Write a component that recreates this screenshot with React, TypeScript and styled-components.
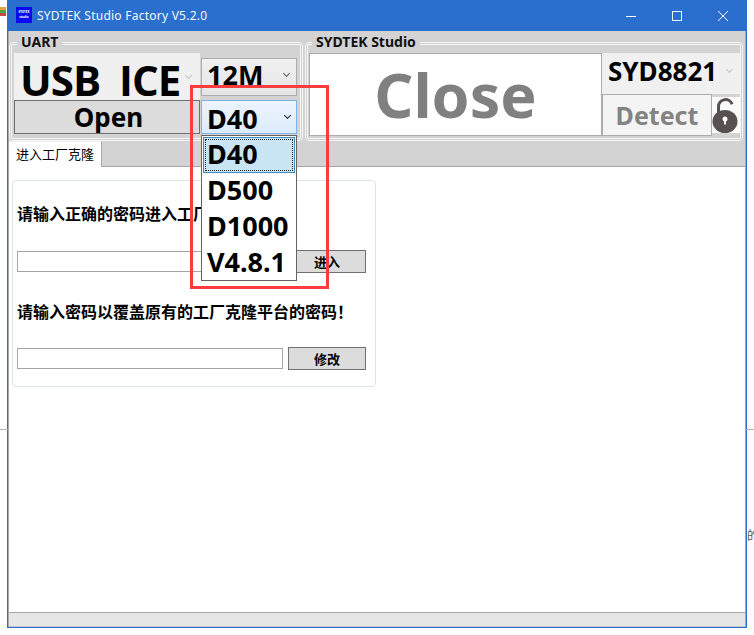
import React from 'react'
import styled, {createGlobalStyle} from 'styled-components'

const UI_FONT = `"Noto Sans", "Noto Sans CJK SC", "Open Sans", sans-serif`

const GlobalStyle = createGlobalStyle`
  html, body {
    margin: 0;
    padding: 0;
    background: #fff;
  }
  body {
    width: 754px;
    height: 635px;
    overflow: hidden;
    font-family: ${UI_FONT};
  }
  * {
    box-sizing: border-box;
  }
`

export default function App() {
  return (
    <Desktop>
      <GlobalStyle />
      <BehindIcon />
      <BehindLine $left />
      <BehindLine />
      <BehindGlyph>的</BehindGlyph>
      <Window>
        <TitleBar>
          <AppIcon>
            <span>SYDTEK</span>
            <span>studio</span>
          </AppIcon>
          <WindowTitle>SYDTEK Studio Factory V5.2.0</WindowTitle>
          <WindowButtons>
            <WindowButton>
              <svg width="12" height="12" viewBox="0 0 12 12">
                <path d="M1 6.5h10" stroke="#fff" strokeWidth="1" />
              </svg>
            </WindowButton>
            <WindowButton>
              <svg width="12" height="12" viewBox="0 0 12 12">
                <rect x="1.5" y="1.5" width="9" height="9" fill="none" stroke="#fff" />
              </svg>
            </WindowButton>
            <WindowButton>
              <svg width="12" height="12" viewBox="0 0 12 12">
                <path d="M1 1l10 10M11 1L1 11" stroke="#fff" strokeWidth="1" />
              </svg>
            </WindowButton>
          </WindowButtons>
        </TitleBar>

        <Client>
          <Toolbar>
            <UartGroup>
              <GroupTitle>UART</GroupTitle>
              <UartGrid>
                <PortSelect>
                  <PortText>USB ICE</PortText>
                  <Chevron $faded />
                </PortSelect>
                <BaudSelect>
                  <ComboText>12M</ComboText>
                  <Chevron />
                </BaudSelect>
                <OpenButton>Open</OpenButton>
                <VersionSelect>
                  <VersionText>D40</VersionText>
                  <Chevron $dark />
                  <VersionList>
                    <VersionOption $selected>D40</VersionOption>
                    <VersionOption>D500</VersionOption>
                    <VersionOption>D1000</VersionOption>
                    <VersionOption>V4.8.1</VersionOption>
                  </VersionList>
                </VersionSelect>
              </UartGrid>
            </UartGroup>

            <StudioGroup>
              <StudioTitle>SYDTEK Studio</StudioTitle>
              <StudioGrid>
                <StatusBox>Close</StatusBox>
                <StudioSide>
                  <ChipSelect>
                    <ChipText>SYD8821</ChipText>
                    <Chevron $faded />
                  </ChipSelect>
                  <DetectRow>
                    <DetectButton>Detect</DetectButton>
                    <LockBox>
                      <svg width="26" height="35" viewBox="0 0 26 35">
                        <path
                          d="M6.5 16V8.5a7 7 0 0 1 13.6-2.2"
                          fill="none"
                          stroke="#57514f"
                          strokeWidth="3"
                        />
                        <ellipse cx="13" cy="23.5" rx="12.5" ry="11.5" fill="#57514f" />
                        <circle cx="13" cy="21" r="2.5" fill="#fff" />
                        <rect x="12" y="21" width="2" height="5.5" fill="#fff" />
                      </svg>
                    </LockBox>
                  </DetectRow>
                </StudioSide>
              </StudioGrid>
            </StudioGroup>
          </Toolbar>

          <TabStrip>
            <Tab>进入工厂克隆</Tab>
          </TabStrip>

          <TabPage>
            <Card>
              <FormBlock>
                <FormLabel>请输入正确的密码进入工厂克隆平台！</FormLabel>
                <FormRow>
                  <TextField />
                  <FormButton>进入</FormButton>
                </FormRow>
              </FormBlock>
              <FormBlock $second>
                <FormLabel>请输入密码以覆盖原有的工厂克隆平台的密码！</FormLabel>
                <FormRow>
                  <TextField />
                  <FormButton>修改</FormButton>
                </FormRow>
              </FormBlock>
            </Card>
          </TabPage>

          <StatusBar />
        </Client>
      </Window>
      <Highlight />
    </Desktop>
  )
}

const Desktop = styled.div`
  position: relative;
  width: 754px;
  height: 635px;
  padding-left: 7px;
  overflow: hidden;
  background: #fff;
`

const BehindIcon = styled.div`
  position: absolute;
  top: 7px;
  left: 0;
  width: 6px;
  height: 9px;
  background: linear-gradient(#e8a23c 0 30%, #4fa34a 30% 65%, #c0503c 65% 100%);
`

const BehindLine = styled.div<{$left?: boolean}>`
  position: absolute;
  top: 429px;
  height: 1px;
  width: 8px;
  background: #b4b4b4;
  ${p => (p.$left ? 'left: 0;' : 'right: 0;')}
`

const BehindGlyph = styled.div`
  position: absolute;
  top: 529px;
  left: 747px;
  width: 7px;
  overflow: hidden;
  font-size: 12px;
  line-height: 14px;
  color: #555;
`

const Window = styled.div`
  width: 740px;
  height: 628px;
  display: flex;
  flex-direction: column;
  border: 1px solid #2b6fce;
  border-top: 0;
  background: #2b6fce;
`

const TitleBar = styled.div`
  height: 31px;
  flex: none;
  display: flex;
  align-items: center;
  padding-left: 8px;
  background: #2b6fce;
  color: #fff;
`

const AppIcon = styled.div`
  width: 16px;
  height: 16px;
  margin-top: -1px;
  display: flex;
  flex-direction: column;
  align-items: center;
  justify-content: center;
  gap: 2px;
  overflow: hidden;
  background: #0a0af0;
  color: #fff;
  font-size: 3px;
  line-height: 3px;
  font-weight: 700;
`

const WindowTitle = styled.div`
  margin-left: 5px;
  font-size: 12px;
  color: #f2f6fc;
  white-space: nowrap;
  letter-spacing: 0.02em;
`

const WindowButtons = styled.div`
  margin-left: auto;
  display: flex;
`

const WindowButton = styled.div`
  width: 46px;
  height: 31px;
  display: flex;
  align-items: center;
  justify-content: center;
`

const Client = styled.div`
  flex: 1;
  min-height: 0;
  display: flex;
  flex-direction: column;
  background: #fff;
  border-left: 1px solid #a8a8a8;
  border-right: 1px solid #a8a8a8;
`

const Toolbar = styled.div`
  height: 110px;
  flex: none;
  display: flex;
  gap: 2px;
  padding: 4px 2px 0 0;
  background: #d3d3d3;
`

const Group = styled.fieldset`
  margin: 0;
  height: 106px;
  padding: 0;
  min-width: 0;
  border: 3px double #f5f5f5;
  border-radius: 4px;
`

const UartGroup = styled(Group)`
  width: 294px;
  flex: none;
`

const StudioGroup = styled(Group)`
  flex: 1;
`

const GroupTitle = styled.legend`
  margin-left: 5px;
  padding: 0 4px 2px;
  font-size: 14px;
  line-height: 14px;
  font-weight: 700;
  color: #111;
`

const StudioTitle = styled(GroupTitle)`
  margin-left: 4px;
`

const UartGrid = styled.div`
  display: grid;
  grid-template-columns: 186px 96px;
  grid-template-rows: 47px 34px;
  gap: 0 1px;
  margin: 2px 0 0 2px;
`

const Combo = styled.div`
  position: relative;
  display: flex;
  align-items: center;
  justify-content: space-between;
  color: #000;
  font-weight: 700;
`

const PortSelect = styled(Combo)`
  background: #f0f0f0;
  padding: 0 7px 0 6px;
`

const PortText = styled.span`
  padding-top: 6px;
  font-family: "Open Sans", sans-serif;
  font-size: 42px;
  line-height: 42px;
  letter-spacing: -1px;
  word-spacing: 9px;
  white-space: nowrap;
`

const BaudSelect = styled(Combo)`
  height: 38px;
  align-self: center;
  padding: 0 5px 3px;
  border: 1px solid #acacac;
  background: linear-gradient(#f0f0f0, #e5e5e5);
`

const ComboText = styled.span`
  font-size: 27px;
  line-height: 32px;
`

const VersionText = styled(ComboText)`
  padding-top: 3px;
`

const OpenButton = styled.div`
  display: flex;
  align-items: center;
  justify-content: center;
  padding-left: 3px;
  border: 1px solid #707070;
  background: #dcdcdc;
  color: #000;
  font-size: 26px;
  line-height: 30px;
  font-weight: 700;
`

const VersionSelect = styled(Combo)`
  padding: 0 4px 0 5px;
  border: 1px solid #7eb4ea;
  background: linear-gradient(#ecf4fc, #dcecfc);
`

const VersionList = styled.div`
  position: absolute;
  z-index: 2;
  top: 34px;
  left: -1px;
  width: 96px;
  height: 146px;
  padding: 1px;
  border: 1px solid #646464;
  background: #fff;
`

const VersionOption = styled.div<{$selected?: boolean}>`
  height: 36px;
  padding-left: 4px;
  font-size: 27px;
  line-height: 34px;
  color: #000;
  ${p =>
    p.$selected &&
    `
    background: #c9e5f4;
    box-shadow: inset 0 0 0 1px #3c8dbc;
    outline: 1px dotted #222;
    outline-offset: -3px;
  `}
`

const StudioGrid = styled.div`
  display: flex;
  margin: 2px 3px 0 1px;
`

const StatusBox = styled.div`
  width: 293px;
  height: 83px;
  flex: none;
  display: flex;
  align-items: center;
  justify-content: center;
  border: 1px solid #acacac;
  background: #fff;
  color: #808080;
  font-size: 61px;
  line-height: 80px;
  font-weight: 700;
`

const StudioSide = styled.div`
  width: 138px;
  flex: none;
`

const ChipSelect = styled(Combo)`
  height: 41px;
  padding: 0 6px 5px;
  background: #f0f0f0;
`

const ChipText = styled.span`
  font-size: 26px;
  line-height: 32px;
`

const DetectRow = styled.div`
  display: flex;
  align-items: center;
`

const DetectButton = styled.div`
  width: 110px;
  height: 42px;
  flex: none;
  display: flex;
  align-items: center;
  justify-content: center;
  padding-bottom: 1px;
  border: 1px solid #adadad;
  background: #f4f4f4;
  color: #838383;
  font-size: 25px;
  line-height: 30px;
  font-weight: 700;
`

const LockBox = styled.div`
  width: 28px;
  height: 36px;
  display: flex;
  align-items: center;
  justify-content: flex-start;
  background: #fafafa;
`

const Chevron = styled.i<{$faded?: boolean; $dark?: boolean}>`
  display: block;
  width: 5px;
  height: 5px;
  margin: -3px 2px 0 0;
  border-right: 1.5px solid ${p => (p.$faded ? '#c4c4c4' : p.$dark ? '#222' : '#606060')};
  border-bottom: 1.5px solid ${p => (p.$faded ? '#c4c4c4' : p.$dark ? '#222' : '#606060')};
  transform: rotate(45deg);
`

const TabStrip = styled.div`
  height: 26px;
  flex: none;
  display: flex;
  align-items: flex-end;
  background: #d3d3d3;
  border-bottom: 1px solid #a8a8a8;
`

const Tab = styled.div`
  width: 93px;
  height: 26px;
  margin-bottom: -1px;
  padding-top: 2px;
  text-align: center;
  background: #fff;
  border-right: 1px solid #a8a8a8;
  border-top: 1px solid #f0f0f0;
  font-size: 13px;
  line-height: 20px;
  color: #000;
`

const TabPage = styled.div`
  flex: 1;
  min-height: 0;
  padding: 13px 0 0 3px;
  background: #fff;
`

const Card = styled.div`
  width: 364px;
  height: 207px;
  padding: 0 9px 0 4px;
  border: 1px solid #dde3e8;
  border-radius: 4px;
  background: #fff;
`

const FormBlock = styled.div<{$second?: boolean}>`
  display: flex;
  flex-direction: column;
  gap: ${p => (p.$second ? '24px' : '25px')};
  margin-top: ${p => (p.$second ? '28px' : '22px')};
`

const FormLabel = styled.div`
  font-size: 16px;
  line-height: 22px;
  font-weight: 700;
  color: #000;
  white-space: nowrap;
`

const FormRow = styled.div`
  display: flex;
  align-items: center;
  gap: 5px;
`

const TextField = styled.div`
  width: 266px;
  height: 21px;
  border: 1px solid #a5a5a5;
  background: #fff;
`

const FormButton = styled.div`
  width: 78px;
  height: 23px;
  display: flex;
  align-items: center;
  justify-content: center;
  border: 1px solid #707070;
  background: #dcdcdc;
  font-size: 13px;
  font-weight: 700;
  color: #000;
`

const StatusBar = styled.div`
  height: 15px;
  flex: none;
  background: #e6e6e6;
  border-top: 1px solid #a8a8a8;
  border-bottom: 1px solid #c8c8c8;
`

const Highlight = styled.div`
  position: absolute;
  z-index: 3;
  left: 190px;
  top: 85px;
  width: 139px;
  height: 204px;
  border: 3px solid #fa3c3c;
  pointer-events: none;
`
